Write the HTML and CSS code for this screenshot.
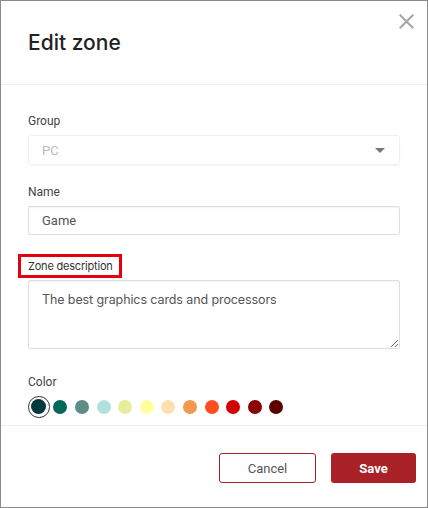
FILE: index.html
```html
<!DOCTYPE html>
<html lang="en">

<head>
    <meta charset="UTF-8">
    <meta name="viewport" content="width=device-width, initial-scale=1.0">
    <title>Edit zone</title>
    <link rel="stylesheet" href="styles.css">
</head>

<body>
    <div class="modal">
        <div class="modal-header">
            <h2 class="modal-title">Edit zone</h2>
            <button class="close-btn" aria-label="Close">
                <svg width="15" height="15" viewBox="0 0 15 15">
                    <path d="M1.5 1.5 L13.5 13.5 M13.5 1.5 L1.5 13.5" stroke="#a8a8a8" stroke-width="2.2" stroke-linecap="square" />
                </svg>
            </button>
        </div>

        <div class="modal-body">
            <div class="field">
                <label class="field-label">Group</label>
                <div class="select">
                    <span class="select-value">PC</span>
                    <span class="select-arrow"></span>
                </div>
            </div>

            <div class="field">
                <label class="field-label">Name</label>
                <input class="text-input" type="text" value="Game">
            </div>

            <div class="field field-wide">
                <label class="field-label highlighted">Zone description</label>
                <textarea class="text-area">The best graphics cards and processors</textarea>
            </div>

            <div class="field">
                <label class="field-label">Color</label>
                <div class="swatches">
                    <span class="swatch selected"><i style="background: #003a3e;"></i></span>
                    <span class="swatch"><i style="background: #00695c;"></i></span>
                    <span class="swatch"><i style="background: #5e8c87;"></i></span>
                    <span class="swatch"><i style="background: #b2dfdb;"></i></span>
                    <span class="swatch"><i style="background: #e6ee9c;"></i></span>
                    <span class="swatch"><i style="background: #ffff9e;"></i></span>
                    <span class="swatch"><i style="background: #ffdfb0;"></i></span>
                    <span class="swatch"><i style="background: #f5984e;"></i></span>
                    <span class="swatch"><i style="background: #ff4f20;"></i></span>
                    <span class="swatch"><i style="background: #d20000;"></i></span>
                    <span class="swatch"><i style="background: #8b0000;"></i></span>
                    <span class="swatch"><i style="background: #5c0000;"></i></span>
                </div>
            </div>
        </div>

        <div class="modal-footer">
            <button class="btn btn-cancel">Cancel</button>
            <button class="btn btn-save">Save</button>
        </div>
    </div>
</body>

</html>
```

FILE: styles.css
```css
html, body {
    margin: 0;
    padding: 0;
    background: #fff;
}

.modal {
    width: 428px;
    height: 508px;
    box-sizing: border-box;
    border: 1px solid #8a8a8a;
    display: flex;
    flex-direction: column;
    font-family: Roboto, "Liberation Sans", sans-serif;
}

.modal-header {
    position: relative;
    height: 84px;
    box-sizing: border-box;
    padding: 29px 27px 0;
    border-bottom: 1px solid #ececec;
}

.modal-title {
    margin: 0;
    font-family: Inter, "Noto Sans", sans-serif;
    font-weight: 500;
    font-size: 21px;
    line-height: 26px;
    color: #222;
}

.close-btn {
    position: absolute;
    top: 13px;
    right: 13px;
    padding: 0;
    border: none;
    background: none;
    width: 15px;
    height: 15px;
    cursor: pointer;
}

.close-btn svg {
    display: block;
}

.modal-body {
    flex: 1;
    padding: 29px 27px 0;
    border-bottom: 1px solid #ececec;
}

.field {
    margin-bottom: 20px;
}

.field-wide {
    margin-bottom: 26px;
}

.field-label {
    display: block;
    font-size: 12px;
    line-height: 14px;
    color: #444;
    margin-bottom: 7px;
}

.field-label.highlighted {
    display: inline-block;
    font-family: Inter, "Noto Sans", sans-serif;
    font-size: 11px;
    letter-spacing: -0.2px;
    color: #333;
    padding: 2px 6px 2px 7px;
    margin: -2px 0 5px -7px;
    outline: 3px solid #e3000f;
}

.select {
    height: 30px;
    box-sizing: border-box;
    border: 1px solid #f0f0f0;
    border-radius: 3px;
    box-shadow: 0 1px 2px rgba(0, 0, 0, 0.04);
    display: flex;
    align-items: center;
    justify-content: space-between;
    padding: 0 14px 0 13px;
}

.select-value {
    font-size: 13px;
    color: #bbb;
}

.select-arrow {
    width: 0;
    height: 0;
    border-left: 5px solid transparent;
    border-right: 5px solid transparent;
    border-top: 5px solid #777;
}

.text-input,
.text-area {
    display: block;
    width: 100%;
    box-sizing: border-box;
    border: 1px solid #dedede;
    border-radius: 2px;
    box-shadow: inset 0 1px 2px rgba(0, 0, 0, 0.05);
    color: #555;
    outline: none;
    margin: 0;
}

.text-input {
    height: 29px;
    padding: 0 13px;
    font-family: Roboto, "Liberation Sans", sans-serif;
    font-size: 13px;
}

.text-area {
    height: 69px;
    padding: 9px 13px;
    font-family: Inter, "Noto Sans", sans-serif;
    font-size: 12.5px;
    letter-spacing: -0.1px;
    line-height: 20px;
    resize: vertical;
}

.field:last-child {
    margin-bottom: 0;
}

.swatches {
    display: flex;
}

.swatch {
    width: 21.6px;
    height: 21.6px;
    box-sizing: border-box;
    display: flex;
    align-items: center;
    justify-content: center;
    border-radius: 50%;
}

.swatch i {
    display: block;
    width: 14px;
    height: 14px;
    border-radius: 50%;
}

.swatch.selected {
    border: 1.5px solid #333;
}

.swatch.selected i {
    width: 15px;
    height: 15px;
}

.modal-footer {
    height: 81px;
    box-sizing: border-box;
    padding: 27px 11px 0;
    display: flex;
    justify-content: flex-end;
    align-items: flex-start;
    gap: 15px;
}

.btn {
    height: 30px;
    border-radius: 3px;
    font-family: Roboto, "Liberation Sans", sans-serif;
    font-size: 13px;
    cursor: pointer;
}

.btn-cancel {
    width: 97px;
    border: 1px solid #a82227;
    background: #fff;
    color: #555;
}

.btn-save {
    width: 85px;
    border: none;
    background: #a82227;
    color: #fff;
    font-weight: 700;
}
```
